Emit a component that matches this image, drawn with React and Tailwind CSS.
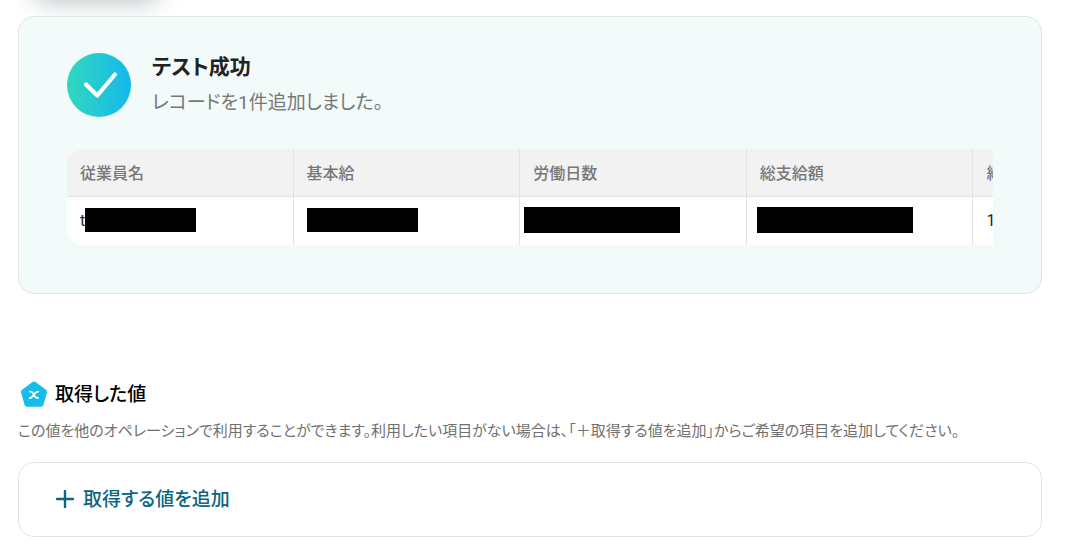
import React from "react";

const columns = [
  { name: "従業員名", value: "t", mask: "h-6 w-[111px]" },
  { name: "基本給", value: "", mask: "h-6 w-[111px]" },
  { name: "労働日数", value: "", mask: "h-[26px] w-[156px] -ml-[9px]" },
  { name: "総支給額", value: "", mask: "h-[26px] w-[156px] -ml-[3px]" },
  { name: "給", value: "1", mask: "" },
];

const CheckBadge = () => {
  return (
    <svg className="w-16 h-16 shrink-0" viewBox="0 0 64 64" fill="none" aria-hidden="true">
      <defs>
        <linearGradient id="badge" x1="0" y1="0" x2="64" y2="0" gradientUnits="userSpaceOnUse">
          <stop stopColor="#31d8bd" />
          <stop offset="1" stopColor="#15b8ec" />
        </linearGradient>
      </defs>
      <circle cx="32" cy="32" r="32" fill="url(#badge)" />
      <path
        d="M19 31.5L30.3 42.5L48 21.5"
        stroke="#fff"
        strokeWidth="4.2"
        strokeLinecap="round"
        strokeLinejoin="round"
      />
    </svg>
  );
};

const VariableIcon = () => {
  return (
    <svg className="w-8 h-8 shrink-0" viewBox="0 0 32 32" fill="none" aria-hidden="true">
      <path
        d="M16 6L26.5 13.8L23 26.2H9L5.5 13.8Z"
        fill="#17bce9"
        stroke="#17bce9"
        strokeWidth="5"
        strokeLinejoin="round"
      />
      <path
        d="M12 13.6C14 13.6 14.6 14.4 15.2 15.4L16.6 18.1C17.2 19.2 18 20 20 20M20.2 13.6C18.6 13.6 18 14.2 17.1 15.2L14.7 18.2C13.9 19.3 13.2 20 11.6 20"
        stroke="#fff"
        strokeWidth="1.9"
        strokeLinecap="round"
      />
    </svg>
  );
};

const App = () => {
  return (
    <div className="relative overflow-hidden bg-white pl-[18px] pr-11 pt-4 pb-1 text-[#222] [font-family:Roboto,'Noto_Sans_CJK_JP',sans-serif] [font-feature-settings:'palt']">
      {/* shadow of the button scrolled above */}
      <div className="absolute -top-12 left-[34px] h-11 w-[126px] rounded-2xl shadow-[0_6px_24px_rgba(20,50,60,0.3)]"></div>

      {/* test result */}
      <section className="relative rounded-2xl border border-[#e2e4e4] bg-[#f2fbfa] px-12 pt-9 pb-12">
        <div className="flex gap-[21px]">
          <CheckBadge />
          <div>
            <h2 className="text-[21px] leading-7 font-bold">テスト成功</h2>
            <p className="mt-2 text-[19px] leading-7 font-normal text-[#777]">レコードを1件追加しました。</p>
          </div>
        </div>

        <div className="mt-8 overflow-hidden rounded-l-2xl bg-white">
          <table className="w-[1133px] table-fixed border-separate border-spacing-0 text-left text-base">
            <thead>
              <tr className="h-12 bg-[#f2f2f2] text-[#777]">
                {columns.map((col) => (
                  <th key={col.name} className="border-r border-b border-[#e2e2e2] px-[13px] pt-0.5 pb-0 font-medium">
                    {col.name}
                  </th>
                ))}
              </tr>
            </thead>
            <tbody>
              <tr className="h-12">
                {columns.map((col) => (
                  <td key={col.name} className="border-r border-[#e2e2e2] px-[13px] pt-0 pb-0.5">
                    <div className="flex items-center">
                      {col.value && <span className="pt-0.5">{col.value}</span>}
                      {col.mask && <span className={"block shrink-0 bg-black " + col.mask}></span>}
                    </div>
                  </td>
                ))}
              </tr>
            </tbody>
          </table>
        </div>
      </section>

      {/* output values */}
      <section className="mt-21">
        <div className="flex items-center gap-[5px]">
          <VariableIcon />
          <h2 className="pt-0.5 text-[19px] leading-[30px] font-medium text-black">取得した値</h2>
        </div>
        <p className="mt-[9px] text-[15px] leading-6 font-normal text-[#707070] whitespace-nowrap">
          この値を他のオペレーションで利用することができます。利用したい項目がない場合は、「＋取得する値を追加」からご希望の項目を追加してください。
        </p>
        <div className="mt-[19px] rounded-2xl border border-[#e2e4e4] px-[37px] pt-[22px] pb-[23px]">
          <button type="button" className="flex items-center gap-[9px] text-[19px] leading-7 font-medium text-[#0b6680]">
            <svg className="w-[18px] h-[18px]" viewBox="0 0 18 18" fill="none" aria-hidden="true">
              <path d="M9 1V17M1 9H17" stroke="currentColor" strokeWidth="2.4" strokeLinecap="round" />
            </svg>
            <span className="pt-0.5 leading-[26px]">取得する値を追加</span>
          </button>
        </div>
      </section>
    </div>
  );
};

export default App;
